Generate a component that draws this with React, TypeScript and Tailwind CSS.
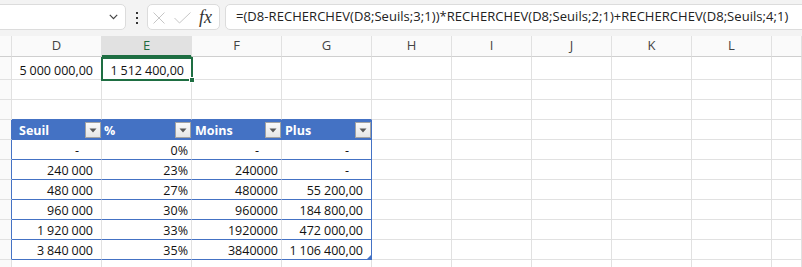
import React from "react";

type CellSpec = { c?: React.ReactNode; r?: string; b?: string; cls?: string };

const W = [
  "w-[12px]",
  "w-[90px]",
  "w-[90px]",
  "w-[90px]",
  "w-[90px]",
  "w-[80px]",
  "w-[80px]",
  "w-[80px]",
  "w-[80px]",
  "w-[80px]",
  "flex-1 min-w-0",
];

function Row({ h, cells }: { h: string; cells: CellSpec[] }) {
  return (
    <div className={`flex shrink-0 ${h}`}>
      {W.map((w, i) => {
        const s = cells[i] || {};
        return (
          <div
            key={i}
            className={`${w} shrink-0 border-r border-b ${s.r ?? "border-r-[#e1e1e1]"} ${s.b ?? "border-b-[#e1e1e1]"} ${s.cls ?? ""}`}
          >
            {s.c}
          </div>
        );
      })}
    </div>
  );
}

function Spaced({ v }: { v: string }) {
  const parts = v.split(" ");
  return (
    <span className="whitespace-nowrap">
      {parts.map((p, i) => (
        <React.Fragment key={i}>
          {i > 0 && <span className="inline-block w-[3px]" />}
          {p}
        </React.Fragment>
      ))}
    </span>
  );
}

function Num({ v, pr }: { v: string; pr: string }) {
  return (
    <div className={`h-full flex items-end justify-end pb-[2px] leading-none text-[12.5px] text-[#111] ${pr}`}>
      <Spaced v={v} />
    </div>
  );
}

function Btn() {
  return (
    <div className="mb-[1px] w-[16px] h-[16px] shrink-0 border border-[#a3a3a3] bg-gradient-to-b from-[#fafafa] to-[#e6e6e6] flex items-center justify-center">
      <svg width="8" height="5" viewBox="0 0 8 5">
        <path d="M0.5 0.5 L7.5 0.5 L4 4.5 Z" fill="#595959" />
      </svg>
    </div>
  );
}

function TH({ t, pl }: { t: string; pl: string }) {
  return (
    <div className={`h-full flex items-end justify-between ${pl}`}>
      <span className="pb-[2px] leading-none text-[12.5px] font-bold text-white">{t}</span>
      <Btn />
    </div>
  );
}

const BLUE = "border-r-[#4472c4]";
const BLUEB = "border-b-[#4472c4]";

export default function App() {
  const letters = ["", "D", "E", "F", "G", "H", "I", "J", "K", "L", ""];
  const data: [string, string, string, string][] = [
    ["-", "0%", "-", "-"],
    ["240 000", "23%", "240000", "-"],
    ["480 000", "27%", "480000", "55 200,00"],
    ["960 000", "30%", "960000", "184 800,00"],
    ["1 920 000", "33%", "1920000", "472 000,00"],
    ["3 840 000", "35%", "3840000", "1 106 400,00"],
  ];

  const acc = (v: string) =>
    v === "-" ? <Num v="-" pr="pr-[22px]" /> : <Num v={v} pr="pr-[8px]" />;
  const plain = (v: string) =>
    v === "-" ? <Num v="-" pr="pr-[22px]" /> : <Num v={v} pr="pr-[3px]" />;

  return (
    <div
      className="w-[802px] h-[267px] overflow-hidden bg-white flex flex-col"
      style={{ fontFamily: '"Open Sans", "Noto Sans", sans-serif' }}
    >
      {/* Formula bar */}
      <div className="flex h-[36px] shrink-0 bg-[#f3f3f3] pt-[4px] items-start">
        <div className="ml-[-12px] w-[138px] h-[26px] shrink-0 bg-white border border-[#dcdcdc] rounded-[5px] flex items-center justify-end pr-[7px]">
          <svg width="9" height="6" viewBox="0 0 9 6">
            <path d="M0.8 0.8 L4.5 4.6 L8.2 0.8" fill="none" stroke="#444" strokeWidth="1.2" />
          </svg>
        </div>
        <div className="w-[21px] h-[26px] shrink-0 flex flex-col items-center justify-center gap-[3px] pt-[1px]">
          <div className="w-[2px] h-[2px] bg-[#333]" />
          <div className="w-[2px] h-[2px] bg-[#333]" />
          <div className="w-[2px] h-[2px] bg-[#333]" />
        </div>
        <div className="w-[73px] h-[26px] shrink-0 bg-white border border-[#dcdcdc] rounded-[5px] flex items-center pl-[5px] pt-[2px]">
          <svg width="12" height="12" viewBox="0 0 12 12">
            <path d="M0.5 0.5 L11.5 11.5 M11.5 0.5 L0.5 11.5" stroke="#c6c6c6" strokeWidth="1" />
          </svg>
          <svg className="ml-[9px]" width="17" height="12" viewBox="0 0 17 12">
            <path d="M0.5 6 L5.5 11 L16.5 0.5" fill="none" stroke="#c6c6c6" strokeWidth="1" />
          </svg>
          <span
            className="ml-[8px] text-[18px] italic leading-none text-[#333] mt-[-3px]"
            style={{ fontFamily: '"Liberation Serif", serif' }}
          >
            fx
          </span>
        </div>
        <div className="ml-[5px] flex-1 mr-[-20px] h-[26px] bg-white border border-[#dcdcdc] rounded-[5px] flex items-center pl-[10px] overflow-hidden">
          <span className="text-[13px] text-[#222] whitespace-nowrap tracking-[0.05px]">
            =(D8-RECHERCHEV(D8;Seuils;3;1))*RECHERCHEV(D8;Seuils;2;1)+RECHERCHEV(D8;Seuils;4;1)
          </span>
        </div>
      </div>

      {/* Column headers */}
      <Row
        h="h-[21px]"
        cells={letters.map((l, i) => ({
          c: (
            <div className={`h-full flex items-center justify-center text-[13px] ${i === 2 ? "text-[#1f6b3e]" : "text-[#444]"}`}>
              {l}
            </div>
          ),
          r: "border-r-[#e1e1e1]",
          b: i === 2 ? "border-b-[#1e6e42]" : "border-b-[#cfcfcf]",
          cls:
            i === 2
              ? "bg-[#e1e1e1] shadow-[inset_0_-1px_0_#1e6e42]"
              : "bg-[#fafafa]",
        }))}
      />

      {/* Row 1 */}
      <Row
        h="h-[23px]"
        cells={[
          { cls: "bg-[#fafafa]" },
          { c: <Num v="5 000 000,00" pr="pr-[8px]" /> },
          {
            cls: "relative",
            c: (
              <>
                <Num v="1 512 400,00" pr="pr-[7px]" />
                <div className="absolute left-[-1px] top-0 right-[-2px] bottom-[-2px] border-2 border-[#1e6e42] pointer-events-none" />
                <div className="absolute right-[-4px] bottom-[-4px] w-[6px] h-[6px] bg-[#1e6e42] border border-white" />
              </>
            ),
          },
        ]}
      />

      {/* Row 2 */}
      <Row h="h-[20px]" cells={[{ cls: "bg-[#fafafa]" }]} />

      {/* Row 3 */}
      <Row
        h="h-[20px]"
        cells={[
          { cls: "bg-[#fafafa]" },
          { b: BLUEB },
          { b: BLUEB },
          { b: BLUEB },
          { b: BLUEB },
        ]}
      />

      {/* Table header */}
      <Row
        h="h-[20px]"
        cells={[
          { cls: "bg-[#fafafa]", r: BLUE },
          { r: BLUE, b: BLUEB, cls: "bg-[#4472c4]", c: <TH t="Seuil" pl="pl-[7px]" /> },
          { r: BLUE, b: BLUEB, cls: "bg-[#4472c4]", c: <TH t="%" pl="pl-[2px]" /> },
          { r: BLUE, b: BLUEB, cls: "bg-[#4472c4]", c: <TH t="Moins" pl="pl-[3px]" /> },
          { r: BLUE, b: BLUEB, cls: "bg-[#4472c4]", c: <TH t="Plus" pl="pl-[3px]" /> },
        ]}
      />

      {/* Table rows */}
      {data.map((d, ri) => (
        <Row
          key={ri}
          h="h-[20px]"
          cells={[
            { cls: "bg-[#fafafa]", r: BLUE },
            { b: BLUEB, c: acc(d[0]) },
            { b: BLUEB, c: plain(d[1]) },
            { b: BLUEB, c: plain(d[2]) },
            {
              b: BLUEB,
              r: BLUE,
              cls: ri === data.length - 1 ? "relative" : "",
              c: (
                <>
                  {acc(d[3])}
                  {ri === data.length - 1 && (
                    <svg className="absolute right-0 bottom-0" width="4" height="4" viewBox="0 0 4 4">
                      <path d="M4 0 L4 4 L0 4 Z" fill="#4472c4" />
                    </svg>
                  )}
                </>
              ),
            },
          ]}
        />
      ))}

      {/* Trailing row */}
      <Row h="h-[20px]" cells={[{ cls: "bg-[#fafafa]" }]} />
    </div>
  );
}
